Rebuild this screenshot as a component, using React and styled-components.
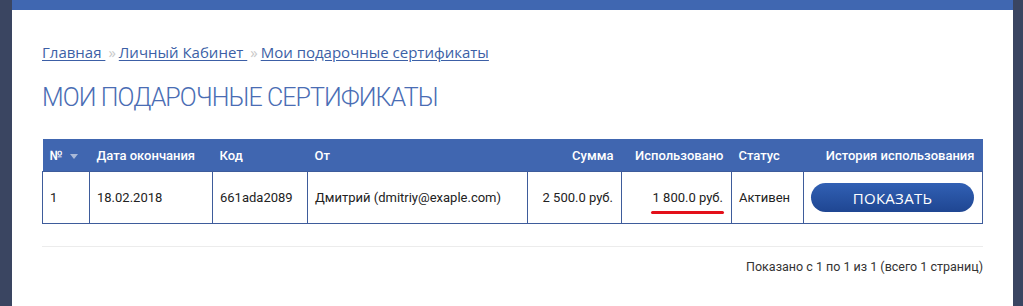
import React from 'react'
import styled, { createGlobalStyle } from 'styled-components'

const GlobalStyle = createGlobalStyle`
  html, body {
    margin: 0;
    padding: 0;
    background: #3a4561;
  }
  body {
    font-family: Roboto, "Noto Sans", sans-serif;
  }
`

const Page = styled.div`
  display: flex;
  padding: 0 11px 0 12px;
  min-height: 306px;
  box-sizing: border-box;
`

const Panel = styled.main`
  flex: 1;
  background: #ffffff;
  border-top: 10px solid #4067b1;
  padding: 32px 30px 0;
  box-sizing: border-box;
`

const Breadcrumbs = styled.nav`
  font-family: "Open Sans", sans-serif;
  font-size: 15px;
  line-height: 20px;
  color: #c7c7c7;
`

const Crumb = styled.a`
  color: #3c5fa6;
  text-decoration: underline;
  text-underline-offset: 2px;
`

const Sep = styled.span`
  color: #c9c9c9;
  margin: 0 3px;
`

const Title = styled.h1`
  margin: 21px 0 0;
  font-family: Roboto, sans-serif;
  font-weight: 300;
  font-size: 25px;
  line-height: 30px;
  color: #4a6db4;
  letter-spacing: -0.9px;
`

const Table = styled.table`
  width: 100%;
  margin-top: 26px;
  border-collapse: collapse;
  table-layout: fixed;
  font-size: 13px;
  color: #222;
`

const HeadCell = styled.th`
  background: #4066b0;
  color: #ffffff;
  font-weight: 500;
  height: 32px;
  padding: 0 8px 0 7px;
  text-align: ${({ align }) => align || 'left'};
  white-space: nowrap;
`

const SortArrow = styled.span`
  display: inline-block;
  margin-left: 7px;
  vertical-align: middle;
  border-left: 4px solid transparent;
  border-right: 4px solid transparent;
  border-top: 5px solid #a9b9d8;
`

const Cell = styled.td`
  border: 1px solid #3e5c9b;
  height: 51px;
  padding: 0 8px 0 7px;
  text-align: ${({ align }) => align || 'left'};
  white-space: nowrap;
`

const Marked = styled.span`
  position: relative;
  &::after {
    content: "";
    position: absolute;
    left: -2px;
    right: -1px;
    bottom: -9px;
    height: 3px;
    border-radius: 2px;
    background: #e3101a;
  }
`

const ShowButton = styled.button`
  display: block;
  width: 100%;
  height: 29px;
  border: none;
  border-radius: 15px;
  background: linear-gradient(#3160b4, #1f4692);
  color: #ffffff;
  font-family: "Open Sans", sans-serif;
  font-size: 15px;
  letter-spacing: 0.3px;
  cursor: pointer;
`

const Footer = styled.div`
  margin-top: 22px;
  border-top: 1px solid #ececec;
  padding-top: 12px;
  text-align: right;
  font-size: 12.5px;
  color: #333;
`

const columns = [
  { title: '№', width: 47, sort: true },
  { title: 'Дата окончания', width: 123 },
  { title: 'Код', width: 95 },
  { title: 'От', width: 220 },
  { title: 'Сумма', width: 94, align: 'right' },
  { title: 'Использовано', width: 110, align: 'right' },
  { title: 'Статус', width: 72 },
  { title: 'История использования', width: 179, align: 'right' },
]

export default function App() {
  return (
    <>
      <GlobalStyle />
      <Page>
        <Panel>
          <Breadcrumbs>
            <Crumb href="#">Главная </Crumb>
            <Sep>»</Sep>
            <Crumb href="#">Личный Кабинет </Crumb>
            <Sep>»</Sep>
            <Crumb href="#">Мои подарочные сертификаты</Crumb>
          </Breadcrumbs>
          <Title>МОИ ПОДАРОЧНЫЕ СЕРТИФИКАТЫ</Title>
          <Table>
            <colgroup>
              {columns.map((c) => <col key={c.title} style={{ width: c.width }} />)}
            </colgroup>
            <thead>
              <tr>
                {columns.map((c) => (
                  <HeadCell key={c.title} align={c.align}>
                    {c.title}
                    {c.sort && <SortArrow />}
                  </HeadCell>
                ))}
              </tr>
            </thead>
            <tbody>
              <tr>
                <Cell>1</Cell>
                <Cell>18.02.2018</Cell>
                <Cell>661ada2089</Cell>
                <Cell>Дмитрий (dmitriy@exaple.com)</Cell>
                <Cell align="right">2 500.0 руб.</Cell>
                <Cell align="right"><Marked>1 800.0 руб.</Marked></Cell>
                <Cell>Активен</Cell>
                <Cell><ShowButton>ПОКАЗАТЬ</ShowButton></Cell>
              </tr>
            </tbody>
          </Table>
          <Footer>Показано с 1 по 1 из 1 (всего 1 страниц)</Footer>
        </Panel>
      </Page>
    </>
  )
}
